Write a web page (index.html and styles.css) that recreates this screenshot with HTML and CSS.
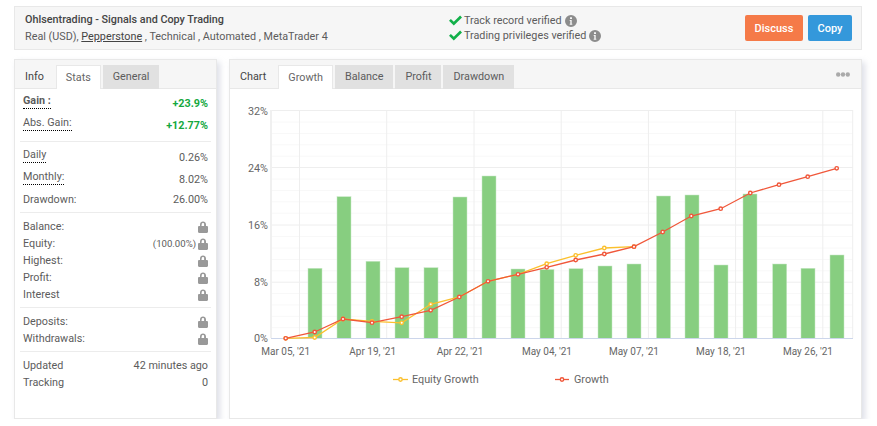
FILE: index.html
```html
<!DOCTYPE html>
<html lang="en">

<head>
    <meta charset="UTF-8">
    <title>Ohlsentrading - Signals and Copy Trading</title>
    <link rel="stylesheet" href="styles.css">
</head>

<body>
    <!-- shared icons -->
    <svg class="defs" width="0" height="0">
        <symbol id="lock" viewBox="0 0 10 12">
            <path d="M2 5V3.400C2 1.600 3.300.4 5 .4s3 1.200 3 3V5h.8c.7 0 1.200.5 1.200 1.200v4.600c0 .7-.5 1.200-1.200 1.200H1.200C.5 12 0 11.500 0 10.800V6.200C0 5.500.5 5 1.200 5zm1.500 0h2.600V3.400C6.300 2.600 5.800 2 5 2s-1.300.6-1.300 1.400z"/>
        </symbol>
        <symbol id="check" viewBox="0 0 13 11">
            <path d="M0 5.800 1.900 3.900 4.800 6.800 11.100.5 13 2.400 4.800 10.600z"/>
        </symbol>
        <symbol id="info" viewBox="0 0 12 12">
            <path fill-rule="evenodd" d="M6 0a6 6 0 1 1 0 12A6 6 0 0 1 6 0zM5 2.300v1.800h2V2.300zM4.700 5v1h.6v2.700h-.6v1h2.600v-1h-.6V5z"/>
        </symbol>
    </svg>

    <header class="top-bar">
        <div class="top-info">
            <div class="top-title">Ohlsentrading - Signals and Copy Trading</div>
            <div class="top-sub">Real (USD), <a class="broker">Pepperstone</a> , Technical , Automated , MetaTrader 4</div>
        </div>
        <div class="verified">
            <div class="verified-row"><svg class="ico-check"><use href="#check"></use></svg>Track record verified<svg class="ico-info"><use href="#info"></use></svg></div>
            <div class="verified-row"><svg class="ico-check"><use href="#check"></use></svg>Trading privileges verified<svg class="ico-info"><use href="#info"></use></svg></div>
        </div>
        <div class="actions">
            <button class="btn btn-discuss">Discuss</button>
            <button class="btn btn-copy">Copy</button>
        </div>
    </header>

    <main class="columns">
        <section class="panel">
            <div class="tabs">
                <span class="tab tab-plain">Info</span>
                <span class="tab tab-active">Stats</span>
                <span class="tab tab-gray">General</span>
            </div>
            <div class="stats">
                <div class="group group-first">
                    <div class="row row-tall"><span class="dotted strong">Gain :</span><span class="green">+23.9%</span></div>
                    <div class="row row-tall"><span class="dotted">Abs. Gain:</span><span class="green">+12.77%</span></div>
                </div>
                <div class="group group-rates">
                    <div class="row row-tall"><span class="dotted">Daily</span><span>0.26%</span></div>
                    <div class="row row-tall"><span class="dotted">Monthly:</span><span>8.02%</span></div>
                    <div class="row row-mid"><span>Drawdown:</span><span>26.00%</span></div>
                </div>
                <div class="group">
                    <div class="row"><span>Balance:</span><svg class="ico-lock"><use href="#lock"></use></svg></div>
                    <div class="row"><span>Equity:</span><span class="with-lock">(100.00%)<svg class="ico-lock"><use href="#lock"></use></svg></span></div>
                    <div class="row"><span>Highest:</span><svg class="ico-lock"><use href="#lock"></use></svg></div>
                    <div class="row"><span>Profit:</span><svg class="ico-lock"><use href="#lock"></use></svg></div>
                    <div class="row"><span>Interest</span><svg class="ico-lock"><use href="#lock"></use></svg></div>
                </div>
                <div class="group">
                    <div class="row"><span>Deposits:</span><svg class="ico-lock"><use href="#lock"></use></svg></div>
                    <div class="row"><span>Withdrawals:</span><svg class="ico-lock"><use href="#lock"></use></svg></div>
                </div>
                <div class="group">
                    <div class="row"><span>Updated</span><span>42 minutes ago</span></div>
                    <div class="row"><span>Tracking</span><span>0</span></div>
                </div>
            </div>
        </section>

        <section class="panel">
            <div class="tabs">
                <span class="tab tab-plain">Chart</span>
                <span class="tab tab-active">Growth</span>
                <span class="tab tab-gray">Balance</span>
                <span class="tab tab-gray">Profit</span>
                <span class="tab tab-gray">Drawdown</span>
                <svg class="more" width="14" height="5" viewBox="0 0 14 5"><circle cx="2.200" cy="2.500" r="2.200"/><circle cx="7" cy="2.500" r="2.200"/><circle cx="11.800" cy="2.500" r="2.200"/></svg>
            </div>
            <svg class="chart" width="631" height="329" viewBox="230 89 631 329">
                <!-- minor grid -->
                <path class="grid-minor" d="M271 122H853M271 133.400H853M271 144.800H853M271 156.200H853M271 179H853M271 190.400H853M271 201.800H853M271 213.200H853M271 236.600H853M271 248H853M271 259.400H853M271 270.800H853M271 293.500H853M271 304.900H853M271 316.300H853M271 327.700H853"/>
                <!-- major grid -->
                <path class="grid-major" d="M271 110.500H853M271 167.500H853M271 225H853M271 282.200H853"/>
                <path class="grid-major" d="M299.500 110V338M386.700 110V338M474 110V338M561.200 110V338M648.400 110V338M735.600 110V338M822.800 110V338M852.700 110V338"/>
                <path class="grid-edge" d="M271 110V338"/>

                <!-- bars -->
                <g class="bars">
                    <rect x="308" y="268.300" width="14" height="70"/>
                    <rect x="337" y="196.700" width="14" height="141.600"/>
                    <rect x="366" y="261.300" width="14" height="77"/>
                    <rect x="395" y="267.700" width="14" height="70.600"/>
                    <rect x="424" y="267.700" width="14" height="70.600"/>
                    <rect x="453" y="197" width="14" height="141.300"/>
                    <rect x="482" y="176" width="14" height="162.300"/>
                    <rect x="511" y="269" width="14" height="69.300"/>
                    <rect x="540" y="269.500" width="14" height="68.800"/>
                    <rect x="569" y="268.700" width="14" height="69.600"/>
                    <rect x="598" y="266" width="14" height="72.300"/>
                    <rect x="627" y="264" width="14" height="74.300"/>
                    <rect x="656.500" y="196" width="14" height="142.300"/>
                    <rect x="685" y="195" width="14" height="143.300"/>
                    <rect x="714" y="265" width="14" height="73.300"/>
                    <rect x="743" y="194" width="14" height="144.300"/>
                    <rect x="772.700" y="264" width="14" height="74.300"/>
                    <rect x="801" y="268.300" width="14" height="70"/>
                    <rect x="830" y="255" width="14" height="83.300"/>
                </g>
                <path class="axis" d="M271 338.500H853"/>

                <!-- equity growth -->
                <polyline class="line-equity" points="285.700,338.300 314.700,337.500 343,319 372,321.400 401.700,322.800 430.700,304.300 459.300,297 488,281.300 518,274.300 546.700,263.700 575.700,255.300 604.300,248 634,246.700"/>
                <g class="dots-equity">
                    <circle cx="285.700" cy="338.300"/><circle cx="314.700" cy="337.500"/><circle cx="343" cy="319"/><circle cx="372" cy="321.400"/><circle cx="401.700" cy="322.800"/><circle cx="430.700" cy="304.300"/><circle cx="546.700" cy="263.700"/><circle cx="575.700" cy="255.300"/><circle cx="604.300" cy="248"/><circle cx="634" cy="246.700"/>
                </g>

                <!-- growth -->
                <polyline class="line-growth" points="285.700,338.300 314.700,332 343,319 372,322.700 401.700,316.700 430.700,310.300 459.300,297 488,281.300 518,274.300 546.700,267.300 575.700,260 604.300,254 634,246.700 662.700,232 691.300,216 720.700,208.700 750.300,193 779,184.700 807.700,176.700 836.700,168.300"/>
                <g class="dots-growth">
                    <circle cx="285.700" cy="338.300"/><circle cx="314.700" cy="332"/><circle cx="343" cy="319"/><circle cx="372" cy="322.700"/><circle cx="401.700" cy="316.700"/><circle cx="430.700" cy="310.300"/><circle cx="459.300" cy="297"/><circle cx="488" cy="281.300"/><circle cx="518" cy="274.300"/><circle cx="546.700" cy="267.300"/><circle cx="575.700" cy="260"/><circle cx="604.300" cy="254"/><circle cx="634" cy="246.700"/><circle cx="662.700" cy="232"/><circle cx="691.300" cy="216"/><circle cx="720.700" cy="208.700"/><circle cx="750.300" cy="193"/><circle cx="779" cy="184.700"/><circle cx="807.700" cy="176.700"/><circle cx="836.700" cy="168.300"/>
                </g>

                <!-- axis labels -->
                <g class="labels-y">
                    <text x="268" y="115">32%</text>
                    <text x="268" y="172">24%</text>
                    <text x="268" y="229">16%</text>
                    <text x="268" y="286">8%</text>
                    <text x="268" y="342">0%</text>
                </g>
                <g class="labels-x">
                    <text x="285.700" y="355">Mar 05, '21</text>
                    <text x="372.700" y="355">Apr 19, '21</text>
                    <text x="460" y="355">Apr 22, '21</text>
                    <text x="547" y="355">May 04, '21</text>
                    <text x="634" y="355">May 07, '21</text>
                    <text x="721" y="355">May 18, '21</text>
                    <text x="808" y="355">May 26, '21</text>
                </g>

                <!-- legend -->
                <path class="line-equity" d="M393 379.500H408"/>
                <g class="dots-equity"><circle cx="400.500" cy="379.500"/></g>
                <text class="legend" x="412" y="383">Equity Growth</text>
                <path class="line-growth" d="M555 379.500H569"/>
                <g class="dots-growth"><circle cx="562" cy="379.500"/></g>
                <text class="legend" x="574" y="383">Growth</text>
            </svg>
        </section>
    </main>
</body>

</html>
```

FILE: styles.css
```css
body {
    margin: 0;
    padding: 6px 15px 0 14px;
    background: #ffffff;
    font-family: Roboto, sans-serif;
    font-size: 10.8px;
    color: #5c5c5c;
}

.defs {
    position: absolute;
}

/* top bar */
.top-bar {
    display: flex;
    align-items: center;
    height: 44px;
    box-sizing: border-box;
    padding: 0 9px 0 10px;
    background: #f6f6f6;
    border: 1px solid #e8e8e8;
}

.top-info {
    flex: 0 0 424px;
    line-height: 17px;
}

.top-title {
    font-weight: 500;
    color: #444444;
}

.broker {
    color: #444444;
    text-decoration: underline;
}

.verified {
    flex: 1;
    line-height: 15px;
}

.verified-row {
    display: flex;
    align-items: center;
}

.ico-check {
    width: 13px;
    height: 11px;
    margin-right: 2px;
    fill: #12b04a;
}

.ico-info {
    width: 12px;
    height: 12px;
    margin-left: 3px;
    fill: #8c8c8c;
}

.actions {
    display: flex;
    gap: 5px;
}

.btn {
    height: 26px;
    padding: 0;
    border: 0;
    border-radius: 2px;
    color: #ffffff;
    font-family: Roboto, sans-serif;
    font-size: 11px;
    font-weight: 500;
}

.btn-discuss {
    width: 58px;
    background: #f57a48;
}

.btn-copy {
    width: 44px;
    background: #3498db;
}

/* panels */
.columns {
    display: grid;
    grid-template-columns: 203px 633px;
    gap: 12px;
    margin-top: 9px;
}

.panel {
    height: 360px;
    box-sizing: border-box;
    background: #ffffff;
    border: 1px solid #e8e8e8;
    box-shadow: 3px 3px 6px rgba(170, 175, 195, 0.4);
}

.tabs {
    display: flex;
    align-items: flex-end;
    height: 28px;
    background: #f6f6f6;
    border-bottom: 1px solid #e8e8e8;
}

.tab {
    height: 24px;
    line-height: 23px;
    box-sizing: border-box;
    padding: 0 10px;
    margin-bottom: -1px;
    margin-right: 2px;
}

.tab-plain {
    color: #444444;
    padding-right: 12px;
    margin-right: 0;
}

.tab-active {
    padding: 0 9px;
    background: #ffffff;
    border: 1px solid #e8e8e8;
    border-bottom: 0;
    color: #666666;
}

.tab-gray {
    background: #e1e1e1;
}

.more {
    margin: 0 11px 11px auto;
    fill: #aaaaaa;
}

/* stats */
.stats {
    padding: 0 5px;
}

.group {
    padding: 5px 3px 4px;
    border-top: 1px solid #ececec;
}

.group-first {
    border-top: 0;
    padding: 3px 3px 5px;
}

.group-rates {
    padding-top: 4px;
}

.row {
    display: flex;
    justify-content: space-between;
    align-items: center;
    height: 17px;
}

.row-tall {
    height: 22px;
}

.row-mid {
    height: 18px;
}

.dotted {
    border-bottom: 1px dotted #000000;
    margin-bottom: 3px;
    line-height: 14px;
}

.strong {
    font-weight: 700;
}

.green {
    color: #14a83f;
    font-weight: 700;
}

.with-lock {
    display: flex;
    align-items: center;
    gap: 2px;
    font-size: 9.6px;
}

.ico-lock {
    width: 10px;
    height: 12px;
    fill: #999999;
}

/* chart */
.chart {
    display: block;
    font-family: Roboto, sans-serif;
    font-size: 10.8px;
    fill: #666666;
}

.grid-minor {
    fill: none;
    stroke: #f8f8f8;
    stroke-width: 1;
}

.grid-major {
    fill: none;
    stroke: #eeeeee;
    stroke-width: 1;
}

.grid-edge {
    fill: none;
    stroke: #f0f0f0;
    stroke-width: 2;
}

.bars rect {
    fill: #87ce80;
    stroke: #c8e8c5;
    stroke-width: 0.5;
}

.axis {
    stroke: #ccd6eb;
    stroke-width: 1;
}

.line-equity {
    fill: none;
    stroke: #fbc02d;
    stroke-width: 1.3;
}

.line-growth {
    fill: none;
    stroke: #f0573a;
    stroke-width: 1.3;
}

.dots-equity circle {
    r: 1.7px;
    fill: #ffffff;
    stroke: #fbc02d;
    stroke-width: 1.4;
}

.dots-growth circle {
    r: 1.7px;
    fill: #ffffff;
    stroke: #f0573a;
    stroke-width: 1.4;
}

.labels-y text {
    text-anchor: end;
}

.labels-x text {
    font-size: 10px;
    text-anchor: middle;
}
```
